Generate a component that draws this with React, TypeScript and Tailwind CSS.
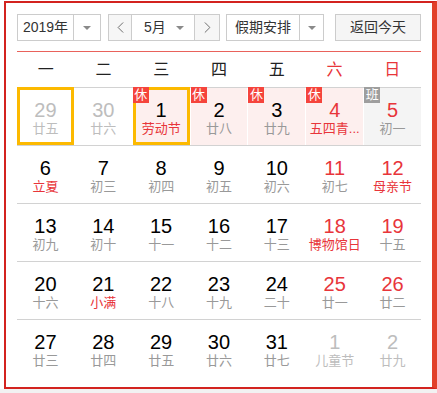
import { ChevronLeft, ChevronRight } from "lucide-react";

type Day = {
    n: number
    l: string
    other?: boolean
    redNum?: boolean
    redLunar?: boolean
    badge?: "休" | "班"
    bg?: "pink" | "gray"
    picked?: boolean
};

const rows: Day[][] = [
    [
        { n: 29, l: "廿五", other: true, picked: true },
        { n: 30, l: "廿六", other: true },
        { n: 1, l: "劳动节", redLunar: true, badge: "休", bg: "pink", picked: true },
        { n: 2, l: "廿八", badge: "休", bg: "pink" },
        { n: 3, l: "廿九", badge: "休", bg: "pink" },
        { n: 4, l: "五四青...", redNum: true, redLunar: true, badge: "休", bg: "pink" },
        { n: 5, l: "初一", redNum: true, badge: "班", bg: "gray" },
    ],
    [
        { n: 6, l: "立夏", redLunar: true },
        { n: 7, l: "初三" },
        { n: 8, l: "初四" },
        { n: 9, l: "初五" },
        { n: 10, l: "初六" },
        { n: 11, l: "初七", redNum: true },
        { n: 12, l: "母亲节", redNum: true, redLunar: true },
    ],
    [
        { n: 13, l: "初九" },
        { n: 14, l: "初十" },
        { n: 15, l: "十一" },
        { n: 16, l: "十二" },
        { n: 17, l: "十三" },
        { n: 18, l: "博物馆日", redNum: true, redLunar: true },
        { n: 19, l: "十五", redNum: true },
    ],
    [
        { n: 20, l: "十六" },
        { n: 21, l: "小满", redLunar: true },
        { n: 22, l: "十八" },
        { n: 23, l: "十九" },
        { n: 24, l: "二十" },
        { n: 25, l: "廿一", redNum: true },
        { n: 26, l: "廿二", redNum: true },
    ],
    [
        { n: 27, l: "廿三" },
        { n: 28, l: "廿四" },
        { n: 29, l: "廿五" },
        { n: 30, l: "廿六" },
        { n: 31, l: "廿七" },
        { n: 1, l: "儿童节", other: true },
        { n: 2, l: "廿九", other: true },
    ],
];

const weekdays = ["一", "二", "三", "四", "五", "六", "日"];

function Caret(){
    return <div className="w-0 h-0 border-x-[4px] border-t-[4px] border-x-transparent border-t-[#8a8a8a]" />;
}

function Cell({ d }: { d: Day }){
    const bg = d.bg == "pink" ? "bg-[#fdefee]" : d.bg == "gray" ? "bg-[#f4f4f4]" : "";
    const numColor = d.other ? "text-[#bdbdbd]" : d.redNum ? "text-[#e8353a]" : "text-black";
    const lunarColor = d.other ? "text-[#bdbdbd]" : d.redLunar ? "text-[#e8353a]" : "text-[#999]";
    return (
        <div className={"relative flex flex-col items-center " + bg}>
            {d.picked ? <div className="absolute inset-x-0 -top-px bottom-0 border-[3px] border-[#fcb900]" /> : null}
            {d.badge ? (
                <div className={"absolute left-0 -top-px w-[16px] h-[16px] text-white text-[13px] leading-[16px] text-center " + (d.badge == "休" ? "bg-[#f5443c]" : "bg-[#9e9e9e]")}>
                    {d.badge}
                </div>
            ) : null}
            <div className={"mt-[11px] text-[20px] leading-[22px] " + numColor}>{d.n}</div>
            <div className={"text-[13px] leading-[16px] whitespace-nowrap " + lunarColor}>{d.l}</div>
        </div>
    );
}

export default function App(){
    return (
        <div className="w-[437px] h-[393px] bg-white text-[#333]" style={{ fontFamily: '"Liberation Sans", "Noto Sans CJK SC", sans-serif' }}>
            <div className="ml-[4px] pt-[1px]">
                <div className="w-[433px] h-[388px] border-2 border-r-[5px] border-[#d3231f] border-r-[#e2402a] px-[11px] pt-[11px]">
                    {/* toolbar */}
                    <div className="flex flex-row items-center h-[27px] text-[14px]">
                        <div className="w-[84px] h-full flex flex-row border border-[#cccccc]">
                            <div className="w-[56px] flex items-center justify-center border-r border-[#cccccc]">2019年</div>
                            <div className="flex-1 flex items-center justify-center"><Caret /></div>
                        </div>
                        <div className="ml-[7px] w-[112px] h-full flex flex-row border border-[#cccccc]">
                            <div className="w-[23px] flex items-center justify-center bg-[#f6f6f6] border-r border-[#cccccc]">
                                <ChevronLeft size={19} strokeWidth={1.2} color="#666" />
                            </div>
                            <div className="w-[63px] flex flex-row items-center pl-[12px] pr-[10px] justify-between border-r border-[#cccccc]">
                                <span>5月</span>
                                <Caret />
                            </div>
                            <div className="flex-1 flex items-center justify-center bg-[#f6f6f6]">
                                <ChevronRight size={19} strokeWidth={1.2} color="#666" />
                            </div>
                        </div>
                        <div className="ml-[6px] w-[98px] h-full flex flex-row border border-[#cccccc]">
                            <div className="w-[73px] flex items-center justify-center border-r border-[#cccccc]">假期安排</div>
                            <div className="flex-1 flex items-center justify-center"><Caret /></div>
                        </div>
                        <div className="ml-auto w-[86px] h-full flex items-center justify-center border border-[#cccccc] bg-[#f5f5f5]">返回今天</div>
                    </div>

                    <div className="mt-[10px] h-px bg-[#e9625b]" />

                    {/* weekdays */}
                    <div className="grid grid-cols-7 h-[35px] items-center text-[16px] pt-[1px]">
                        {weekdays.map((w, i) => (
                            <div key={w} className={"text-center " + (i >= 5 ? "text-[#e8353a]" : "text-[#222]")}>{w}</div>
                        ))}
                    </div>

                    {/* days */}
                    {rows.map((row, i) => (
                        <div key={i} className="grid grid-cols-7 gap-x-px h-[58px] border-t border-[#d2d2d2]">
                            {row.map((d, j) => <Cell key={j} d={d} />)}
                        </div>
                    ))}
                </div>
                <div className="h-[4px] bg-[#f2f2f2] -ml-[4px]" />
            </div>
        </div>
    );
}
